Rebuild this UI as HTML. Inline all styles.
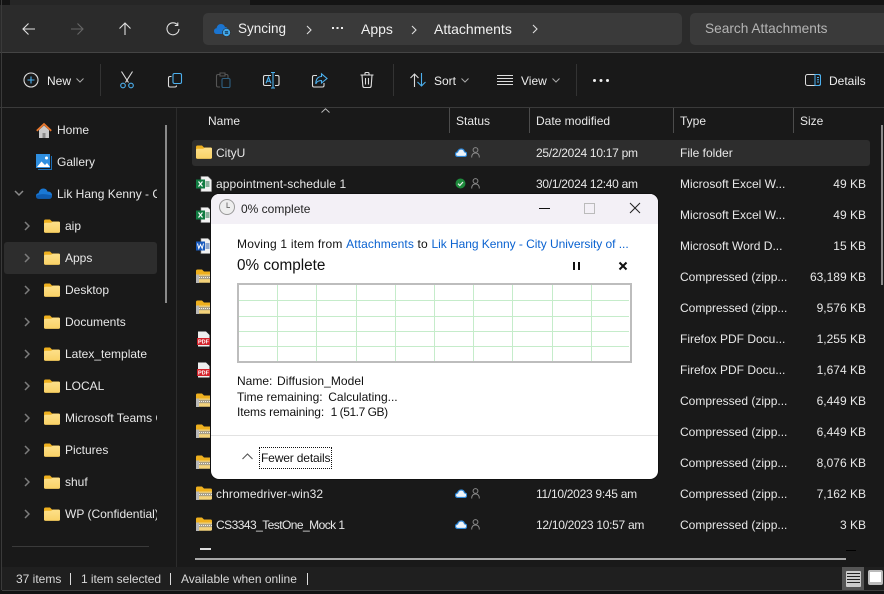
<!DOCTYPE html>
<html><head><meta charset="utf-8">
<style>
html,body{margin:0;padding:0;width:884px;height:594px;overflow:hidden;background:#191919}
body{position:relative;font-family:"Liberation Sans",sans-serif;font-size:12px;color:#e8e8e8}
.t{position:absolute;line-height:16px;white-space:nowrap}
.b{position:absolute}
.r{text-align:right;width:80px;left:786px}
.g{color:#d8d8d8}
svg{position:absolute;overflow:visible}
.i{fill:none;stroke:#e0e0e0;stroke-width:1.1}
.d{color:#111}
.l{color:#0a62d0}
.dt{letter-spacing:-.28px}
</style></head><body>
<svg width="0" height="0" style="position:absolute"><defs>
<linearGradient id="fg" x1="0" y1="0" x2="0" y2="1"><stop offset="0" stop-color="#fde08a"/><stop offset="1" stop-color="#f9d267"/></linearGradient>
<symbol id="f" viewBox="0 0 16 14"><path d="M0 2.200Q0 .5 1.500 .5H6l2 2h6.500Q16 2.500 16 4v8.500q0 1.200-1.500 1.200h-13Q0 13.700 0 12.500z" fill="#eeb01e"/><path d="M0 5.200Q0 3.800 1.500 3.800H7L9 2.600h5.500Q16 2.600 16 4v8.500q0 1.200-1.500 1.200h-13Q0 13.700 0 12.500z" fill="url(#fg)"/></symbol>
<symbol id="z" viewBox="0 0 16 14"><path d="M0 2Q0 .5 1.500 .5H6l2 2h6.500Q16 2.500 16 4v2H0z" fill="#eeb01e"/><path d="M0 5.500h16v7q0 1.200-1.500 1.200h-13Q0 13.700 0 12.500z" fill="#f3d27a"/><path d="M3 6.800h13v3.400H3z" fill="#a89f85"/><path d="M3 8.500h13" stroke="#eee" stroke-dasharray="1 1"/><rect x="0" y="5.500" width="3" height="8.500" fill="#b8b8b8"/></symbol>
<symbol id="x" viewBox="0 0 16 16"><path d="M5 .5h7l3.500 3.500v11.500H5z" fill="#f2f2f2" stroke="#999" stroke-width=".6"/><path d="M9.500 6h4M9.500 8h4M9.500 10h4" stroke="#1d7044"/><rect x="0" y="3.500" width="9" height="9" fill="#107c41"/><path d="M2.500 5.500l4 5M6.500 5.500l-4 5" stroke="#fff" stroke-width="1.200"/></symbol>
<symbol id="w" viewBox="0 0 16 16"><path d="M5 .5h7l3.500 3.500v11.500H5z" fill="#f2f2f2" stroke="#999" stroke-width=".6"/><path d="M9.500 6h4M9.500 8h4M9.500 10h4" stroke="#2a5ca8"/><rect x="0" y="3.500" width="9" height="9" fill="#185abd"/><path d="M1.500 5.500l1.300 5 1.700-4 1.700 4 1.300-5" stroke="#fff" fill="none"/></symbol>
<symbol id="p" viewBox="0 0 13 16"><path d="M1 .5h8l3.500 3.500v11.500H1z" fill="#eee"/><rect y="7" width="13" height="7" fill="#d3222a"/><text x="6.500" y="12.700" font-size="5.500" font-weight="bold" text-anchor="middle" fill="#fff" font-family="Liberation Sans">PDF</text></symbol>
<symbol id="c" viewBox="0 0 12 9"><path d="M3 8.500Q.5 8.500 .5 6.300 .5 4.300 2.600 4 3.400 1 6.300 1 9 1 9.500 3.800 11.700 4 11.700 6.200 11.700 8.500 9.300 8.500z" fill="#eef4fa" stroke="#2b86d8" stroke-width="1.200"/></symbol>
<symbol id="u" viewBox="0 0 9 11"><circle cx="4.500" cy="3" r="2.400" fill="none" stroke="#8a8a8a"/><path d="M.7 10.500Q.7 6 4.500 6 8.300 6 8.300 10.500" fill="none" stroke="#8a8a8a"/></symbol>
<symbol id="ch" viewBox="0 0 6 10"><path d="M1 1l4 4-4 4" fill="none" stroke="#7d7d7d" stroke-width="1.500"/></symbol>
</defs></svg>

<!-- top bands -->
<div class="b" style="left:0;top:0;width:884px;height:5px;background:#141414"></div>
<div class="b" style="left:10px;top:0;width:240px;height:5px;background:#262626"></div>
<div class="b" style="left:0;top:5px;width:884px;height:47px;background:#2b2b2b"></div>
<div class="b" style="left:0;top:52px;width:884px;height:1px;background:#444"></div>
<div class="b" style="left:0;top:107px;width:884px;height:1px;background:#3a3a3a"></div>
<div class="b" style="left:1px;top:0;width:1px;height:590px;background:#3a3a3a"></div>
<div class="b" style="left:176px;top:108px;width:1px;height:459px;background:#2c2c2c"></div>

<!-- nav -->
<svg style="left:22px;top:22px" width="14" height="14" class="i"><path d="M13 7H1M6.500 1.500L1 7l5.500 5.500"/></svg>
<svg style="left:70px;top:22px" width="14" height="14" fill="none" stroke="#666" stroke-width="1.100"><path d="M1 7h12M7.500 1.500L13 7l-5.500 5.500"/></svg>
<svg style="left:118px;top:22px" width="14" height="14" class="i"><path d="M7 13V1M1.500 6.500L7 1l5.500 5.500"/></svg>
<svg style="left:166px;top:22px" width="14" height="14" class="i"><path d="M11.500 2.800A6 6 0 1 0 13 7"/><path d="M11.800 .5v3h-3"/></svg>

<!-- address -->
<div class="b" style="left:203px;top:13px;width:479px;height:32px;background:#3a3a3a;border-radius:5px"></div>
<div class="b" style="left:690px;top:13px;width:194px;height:32px;background:#3a3a3a;border-radius:5px 0 0 5px"></div>
<svg style="left:214px;top:23px" width="18" height="14" viewBox="0 0 18 14"><path d="M3 11Q0 11 0 8 0 5.500 2.500 5.200 3.500 1 7 1 10 1 11 4 14 4 14 7.500L13 11z" fill="#1a74d0"/><circle cx="12.500" cy="9.500" r="4" fill="#42a8ea" stroke="#2b2b2b" stroke-width=".6"/><path d="M10.800 8.800h3.300M14.200 10.200h-3.300" stroke="#12314a"/></svg>
<div class="t" style="left:238px;top:21px;font-size:13.500px;color:#f0f0f0">Syncing</div>
<svg style="left:306px;top:25px" width="6" height="10"><path d="M1 1l4 4-4 4" fill="none" stroke="#ddd" stroke-width="1.100"/></svg>
<div class="b" style="left:332px;top:27px;width:2px;height:2px;background:#eee;box-shadow:4.500px 0 #eee,9px 0 #eee"></div>
<div class="t" style="left:361px;top:21px;font-size:14px;color:#f0f0f0">Apps</div>
<svg style="left:411px;top:25px" width="6" height="10"><path d="M1 1l4 4-4 4" fill="none" stroke="#ddd" stroke-width="1.100"/></svg>
<div class="t" style="left:434px;top:21px;font-size:14px;color:#f0f0f0">Attachments</div>
<svg style="left:532px;top:24px" width="6" height="10"><path d="M1 1l4 4-4 4" fill="none" stroke="#ddd" stroke-width="1.100"/></svg>
<div class="t" style="left:705px;top:21px;font-size:13.700px;color:#b5b5b5">Search Attachments</div>

<!-- toolbar -->
<svg style="left:23px;top:72px" width="16" height="16"><circle cx="8" cy="8" r="7" fill="none" stroke="#ddd" stroke-width="1.100"/><path d="M8 4.500v7M4.500 8h7" stroke="#4cb0ee" stroke-width="1.100"/></svg>
<div class="t" style="left:47px;top:73px;color:#eee">New</div>
<svg style="left:76px;top:78px" width="8" height="5"><path d="M.5 .5L4 4 7.500 .5" fill="none" stroke="#aaa"/></svg>
<div class="b" style="left:100px;top:64px;width:1px;height:32px;background:#333"></div>
<svg style="left:119px;top:71px" width="16" height="18" fill="none"><path d="M2.500 .5l7 11M13.500 .5l-7 11" stroke="#ddd" stroke-width="1.100"/><circle cx="4" cy="14.500" r="2.300" stroke="#4cb0ee" stroke-width="1.100"/><circle cx="12" cy="14.500" r="2.300" stroke="#4cb0ee" stroke-width="1.100"/></svg>
<svg style="left:168px;top:73px" width="14" height="15" fill="none" stroke-width="1.100"><rect x="5" y=".5" width="8.500" height="10" rx="1.500" stroke="#4cb0ee"/><path d="M3.500 3.500H2Q.5 3.500 .5 5v7.500Q.5 14 2 14h5Q8.500 14 8.500 12.500" stroke="#ddd"/></svg>
<svg style="left:216px;top:72px" width="15" height="16" fill="none" stroke-width="1.100"><path d="M4 2.500H2Q.5 2.500 .5 4v9.500Q.5 15 2 15h2" stroke="#555"/><path d="M4 1h5v3H4z M9 2.500h1.500Q12 2.500 12 4v2" stroke="#555"/><rect x="6" y="6.500" width="8" height="9" rx="1.300" stroke="#2f5f80"/></svg>
<svg style="left:263px;top:72px" width="17" height="17" fill="none" stroke-width="1.100"><path d="M8 3.500H2Q.5 3.500 .5 5v7Q.5 13.500 2 13.500h6M12 3.500h2.500Q16 3.500 16 5v7Q16 13.500 14.500 13.500H12" stroke="#ddd"/><path d="M10 .5v15.500M8 .5h4M8 16h4" stroke="#4cb0ee"/><path d="M3 11.300l2.500-6.300 2.500 6.300M3.900 9.200h3.200" stroke="#4cb0ee"/></svg>
<svg style="left:312px;top:73px" width="16" height="15" fill="none" stroke-width="1.100"><path d="M5 2.500H2Q.5 2.500 .5 4v8.500Q.5 14 2 14h8.500Q12 14 12 12.500V10" stroke="#ddd"/><path d="M9.500 .8L15 5.500 9.500 10V7.500Q5 7.500 3.800 11 3.800 3.800 9.500 3.500z" stroke="#4cb0ee"/></svg>
<svg style="left:360px;top:72px" width="14" height="16" fill="none" stroke="#ddd" stroke-width="1.100"><path d="M.5 3h13M5 3V1.500Q5 .5 6 .5h2Q9 .5 9 1.500V3M2 3l.8 11Q3 15.500 4.500 15.500h5Q11 15.500 11.200 14L12 3M5.500 6v6.500M8.500 6v6.500"/></svg>
<div class="b" style="left:393px;top:64px;width:1px;height:32px;background:#333"></div>
<svg style="left:410px;top:73px" width="16" height="14" fill="none" stroke-width="1.100"><path d="M4.500 14V1M.5 5l4-4 4 4" stroke="#ddd"/><path d="M11.500 0v13M7.500 9l4 4 4-4" stroke="#4cb0ee"/></svg>
<div class="t" style="left:434px;top:73px;color:#eee">Sort</div>
<svg style="left:461px;top:78px" width="8" height="5"><path d="M.5 .5L4 4 7.500 .5" fill="none" stroke="#aaa"/></svg>
<svg style="left:497px;top:75px" width="16" height="10" stroke="#ddd"><path d="M0 .5h16M0 3.500h16M0 6.500h16M0 9.500h16"/></svg>
<div class="t" style="left:521px;top:73px;color:#eee">View</div>
<svg style="left:552px;top:78px" width="8" height="5"><path d="M.5 .5L4 4 7.500 .5" fill="none" stroke="#aaa"/></svg>
<div class="b" style="left:576px;top:64px;width:1px;height:32px;background:#333"></div>
<div class="b" style="left:593px;top:79px;width:3px;height:3px;border-radius:50%;background:#eee;box-shadow:6.500px 0 #eee,13px 0 #eee"></div>
<svg style="left:805px;top:74px" width="16" height="12" fill="none"><rect x=".5" y=".5" width="15" height="11" rx="2" stroke="#ddd"/><path d="M10 .5h4Q15.500 .5 15.500 2v8Q15.500 11.500 14 11.500h-4zM12 3.500h2M12 5.800h2M12 8h2" stroke="#4cb0ee"/></svg>
<div class="t" style="left:829px;top:73px;color:#eee">Details</div>

<!-- header -->
<svg style="left:321px;top:108px" width="9" height="5"><path d="M.5 4.500L4.500 .8 8.500 4.500" fill="none" stroke="#bbb"/></svg>
<div class="t" style="left:208px;top:113px">Name</div>
<div class="t" style="left:456px;top:113px">Status</div>
<div class="t" style="left:536px;top:113px">Date modified</div>
<div class="t" style="left:680px;top:113px">Type</div>
<div class="t" style="left:800px;top:113px">Size</div>
<div class="b" style="left:449px;top:108px;width:1px;height:25px;background:#4c4c4c"></div>
<div class="b" style="left:529px;top:108px;width:1px;height:25px;background:#4c4c4c"></div>
<div class="b" style="left:673px;top:108px;width:1px;height:25px;background:#4c4c4c"></div>
<div class="b" style="left:793px;top:108px;width:1px;height:25px;background:#4c4c4c"></div>

<!-- sidebar -->
<div class="b" style="left:4px;top:242px;width:153px;height:32px;background:#2d2d2d;border-radius:3px"></div>
<div class="b" style="left:165px;top:125px;width:2px;height:178px;background:#8a8a8a"></div>
<svg style="left:36px;top:123px" width="16" height="15" viewBox="0 0 16 15"><path d="M3 7v8h10V7L8 2.500z" fill="#c9c9c9"/><rect x="6.500" y="10" width="3" height="5" fill="#8a8a8a"/><path d="M.8 7.800L8 1l7.200 6.800" fill="none" stroke="#e8762c" stroke-width="1.800"/></svg>
<div class="t" style="left:57px;top:122px">Home</div>
<svg style="left:36px;top:154px" width="16" height="16" viewBox="0 0 16 16"><rect x="0" y="0" width="14" height="14" fill="#2f8fe0"/><path d="M1 13l4.500-5.500L9 11l2-2 3 4z" fill="#fff"/><circle cx="10.500" cy="4" r="1.500" fill="#fff"/><path d="M15.500 2v13.500H2" fill="none" stroke="#1c6fb8"/></svg>
<div class="t" style="left:57px;top:154px">Gallery</div>
<svg style="left:14px;top:190px" width="10" height="7"><path d="M1 1l4 4 4-4" fill="none" stroke="#8a8a8a" stroke-width="1.500"/></svg>
<svg style="left:36px;top:188px" width="16" height="11" viewBox="0 0 16 11"><path d="M3 10.800Q0 10.800 0 8 0 5.500 2.500 5.300 3.500 .5 7.500 .5 10.500 .5 11.500 3.500 16 3.500 16 7.500 16 10.800 13 10.800z" fill="#1a78d4"/><path d="M0 8q5-3.500 16-.5 0 3.300-3 3.300H3Q0 10.800 0 8z" fill="#0f5cb0"/></svg>
<div class="t" style="left:57px;top:186px;width:100px;overflow:hidden">Lik Hang Kenny - City</div>

<svg style="left:24px;top:221px" width="6" height="10"><use href="#ch"/></svg><svg style="left:44px;top:219px" width="16" height="14"><use href="#f"/></svg><div class="t" style="left:65px;top:218px">aip</div>
<svg style="left:24px;top:253px" width="6" height="10"><use href="#ch"/></svg><svg style="left:44px;top:251px" width="16" height="14"><use href="#f"/></svg><div class="t" style="left:65px;top:250px">Apps</div>
<svg style="left:24px;top:285px" width="6" height="10"><use href="#ch"/></svg><svg style="left:44px;top:283px" width="16" height="14"><use href="#f"/></svg><div class="t" style="left:65px;top:282px">Desktop</div>
<svg style="left:24px;top:317px" width="6" height="10"><use href="#ch"/></svg><svg style="left:44px;top:315px" width="16" height="14"><use href="#f"/></svg><div class="t" style="left:65px;top:314px">Documents</div>
<svg style="left:24px;top:349px" width="6" height="10"><use href="#ch"/></svg><svg style="left:44px;top:347px" width="16" height="14"><use href="#f"/></svg><div class="t" style="left:65px;top:346px">Latex_template</div>
<svg style="left:24px;top:381px" width="6" height="10"><use href="#ch"/></svg><svg style="left:44px;top:379px" width="16" height="14"><use href="#f"/></svg><div class="t" style="left:65px;top:378px">LOCAL</div>
<svg style="left:24px;top:413px" width="6" height="10"><use href="#ch"/></svg><svg style="left:44px;top:411px" width="16" height="14"><use href="#f"/></svg><div class="t" style="left:65px;top:410px;width:92px;overflow:hidden">Microsoft Teams Chat</div>
<svg style="left:24px;top:445px" width="6" height="10"><use href="#ch"/></svg><svg style="left:44px;top:443px" width="16" height="14"><use href="#f"/></svg><div class="t" style="left:65px;top:442px">Pictures</div>
<svg style="left:24px;top:477px" width="6" height="10"><use href="#ch"/></svg><svg style="left:44px;top:475px" width="16" height="14"><use href="#f"/></svg><div class="t" style="left:65px;top:474px">shuf</div>
<svg style="left:24px;top:509px" width="6" height="10"><use href="#ch"/></svg><svg style="left:44px;top:507px" width="16" height="14"><use href="#f"/></svg><div class="t" style="left:65px;top:506px;width:92px;overflow:hidden">WP (Confidential)</div>
<div class="b" style="left:12px;top:546px;width:137px;height:1px;background:#3a3a3a"></div>

<!-- rows -->
<div class="b" style="left:192px;top:140px;width:678px;height:26px;background:#2d2d2d;border-radius:3px"></div>
<svg style="left:196px;top:145px" width="16" height="14"><use href="#f"/></svg><div class="t" style="left:216px;top:145px">CityU</div>
<svg style="left:455px;top:148px" width="12" height="9"><use href="#c"/></svg><svg style="left:471px;top:147px" width="9" height="11"><use href="#u"/></svg>
<div class="t dt" style="left:536px;top:145px">25/2/2024 10:17 pm</div><div class="t" style="left:680px;top:145px">File folder</div>

<svg style="left:196px;top:176px" width="16" height="16"><use href="#x"/></svg><div class="t" style="left:216px;top:176px;letter-spacing:.1px">appointment-schedule 1</div>
<svg style="left:455px;top:178px" width="11" height="11"><circle cx="5.500" cy="5.500" r="5" fill="#1e8a3c"/><path d="M3 5.700l1.800 1.800L8 4" fill="none" stroke="#eee" stroke-width="1.200"/></svg><svg style="left:471px;top:178px" width="9" height="11"><use href="#u"/></svg>
<div class="t dt" style="left:536px;top:176px">30/1/2024 12:40 am</div><div class="t" style="left:680px;top:176px">Microsoft Excel W...</div><div class="t r" style="top:176px">49 KB</div>

<svg style="left:196px;top:207px" width="16" height="16"><use href="#x"/></svg>
<div class="t" style="left:680px;top:207px">Microsoft Excel W...</div><div class="t r" style="top:207px">49 KB</div>
<svg style="left:196px;top:238px" width="16" height="16"><use href="#w"/></svg>
<div class="t" style="left:680px;top:238px">Microsoft Word D...</div><div class="t r" style="top:238px">15 KB</div>
<svg style="left:196px;top:269px" width="16" height="14"><use href="#z"/></svg>
<div class="t" style="left:680px;top:269px">Compressed (zipp...</div><div class="t r" style="top:269px">63,189 KB</div>
<svg style="left:196px;top:300px" width="16" height="14"><use href="#z"/></svg>
<div class="t" style="left:680px;top:300px">Compressed (zipp...</div><div class="t r" style="top:300px">9,576 KB</div>
<svg style="left:197px;top:331px" width="13" height="16"><use href="#p"/></svg>
<div class="t" style="left:680px;top:331px">Firefox PDF Docu...</div><div class="t r" style="top:331px">1,255 KB</div>
<svg style="left:197px;top:362px" width="13" height="16"><use href="#p"/></svg>
<div class="t" style="left:680px;top:362px">Firefox PDF Docu...</div><div class="t r" style="top:362px">1,674 KB</div>
<svg style="left:196px;top:393px" width="16" height="14"><use href="#z"/></svg>
<div class="t" style="left:680px;top:393px">Compressed (zipp...</div><div class="t r" style="top:393px">6,449 KB</div>
<svg style="left:196px;top:424px" width="16" height="14"><use href="#z"/></svg>
<div class="t" style="left:680px;top:424px">Compressed (zipp...</div><div class="t r" style="top:424px">6,449 KB</div>
<svg style="left:196px;top:455px" width="16" height="14"><use href="#z"/></svg>
<div class="t" style="left:680px;top:455px">Compressed (zipp...</div><div class="t r" style="top:455px">8,076 KB</div>
<svg style="left:196px;top:486px" width="16" height="14"><use href="#z"/></svg><div class="t" style="left:216px;top:486px;letter-spacing:.1px">chromedriver-win32</div>
<svg style="left:455px;top:489px" width="12" height="9"><use href="#c"/></svg><svg style="left:471px;top:488px" width="9" height="11"><use href="#u"/></svg>
<div class="t dt" style="left:536px;top:486px">11/10/2023 9:45 am</div><div class="t" style="left:680px;top:486px">Compressed (zipp...</div><div class="t r" style="top:486px">7,162 KB</div>
<svg style="left:196px;top:517px" width="16" height="14"><use href="#z"/></svg><div class="t" style="left:216px;top:517px;letter-spacing:-.55px">CS3343_TestOne_Mock 1</div>
<svg style="left:455px;top:520px" width="12" height="9"><use href="#c"/></svg><svg style="left:471px;top:519px" width="9" height="11"><use href="#u"/></svg>
<div class="t dt" style="left:536px;top:517px">12/10/2023 10:57 am</div><div class="t" style="left:680px;top:517px">Compressed (zipp...</div><div class="t r" style="top:517px">3 KB</div>

<div class="b" style="left:200px;top:548px;width:11px;height:2px;background:#ddd"></div>
<div class="b" style="left:846px;top:550px;width:10px;height:1px;background:#000"></div>
<div class="b" style="left:195px;top:558px;width:651px;height:2px;background:#a8a8a8"></div>
<div class="b" style="left:881px;top:125px;width:2px;height:160px;background:#8a8a8a"></div>

<!-- status -->
<div class="b" style="left:2px;top:567px;width:882px;height:23px;background:#1f1f1f"></div>
<div class="b" style="left:2px;top:590px;width:882px;height:1px;background:#3f3f3f"></div>
<div class="b" style="left:0;top:591px;width:884px;height:3px;background:#121212"></div>
<div class="t g" style="left:16px;top:571px">37 items</div>
<div class="b" style="left:70px;top:573px;width:1px;height:12px;background:#ddd"></div>
<div class="t g" style="left:81px;top:571px;letter-spacing:-.05px">1 item selected</div>
<div class="b" style="left:170px;top:573px;width:1px;height:12px;background:#ddd"></div>
<div class="t g" style="left:181px;top:571px">Available when online</div>
<div class="b" style="left:307px;top:573px;width:1px;height:12px;background:#ddd"></div>
<div class="b" style="left:842px;top:567px;width:22px;height:23px;background:#555"></div>
<div class="b" style="left:846px;top:571px;width:15px;height:16px;background:#ccc;border-radius:1px"></div>
<svg style="left:847px;top:573px" width="13" height="12" stroke="#222"><path d="M0 .5h13M0 3.500h13M0 6.500h13M0 9.500h13"/></svg>
<div class="b" style="left:868px;top:570px;width:11px;height:10px;background:#fff;border:2px solid #bbb;border-bottom-width:3px;border-radius:2px"></div>

<!-- dialog -->
<div class="b" style="left:211px;top:194px;width:447px;height:285px;background:#fff;border-radius:8px;overflow:hidden;box-shadow:0 0 0 1px #111">
<div class="b" style="left:0;top:0;width:447px;height:30px;background:#f3f0f6"></div>
</div>
<svg style="left:219px;top:199px" width="16" height="16"><circle cx="8" cy="8" r="7.500" fill="#eee" stroke="#999"/><path d="M8 3.500V8.500H11" fill="none" stroke="#777"/></svg>
<div class="t d" style="left:241px;top:201px;color:#222">0% complete</div>
<div class="b" style="left:539px;top:208px;width:11px;height:1px;background:#111"></div>
<div class="b" style="left:584px;top:203px;width:9px;height:9px;border:1px solid #bbb"></div>
<svg style="left:630px;top:203px" width="10" height="10" stroke="#222"><path d="M0 0l10 10M10 0L0 10"/></svg>

<div class="t d" style="left:237px;top:236px"><span style="letter-spacing:.2px">Moving 1 item from </span><span class="l" style="letter-spacing:.1px">Attachments</span><span style="letter-spacing:.2px"> to </span><span class="l" style="letter-spacing:-.04px">Lik Hang Kenny - City University of ...</span></div>
<div class="t d" style="left:237px;top:257px;font-size:15.300px;line-height:18px">0% complete</div>
<div class="b" style="left:573px;top:262px;width:2px;height:8px;background:#111;box-shadow:5px 0 #111"></div>
<svg style="left:619px;top:262px" width="8" height="8" stroke="#111" stroke-width="2"><path d="M.5 .5l7 7M7.500 .5l-7 7"/></svg>

<svg style="left:237px;top:283px" width="395" height="80">
<rect x="1" y="1" width="393" height="78" fill="#fff" stroke="#bdbdbd" stroke-width="2"/>
<g stroke="#c5ecca" stroke-width="1">
<path d="M2 17.500h390M2 33.500h390M2 48.500h390M2 63.500h390"/>
<path d="M40.500 2v76M79.500 2v76M119.500 2v76M158.500 2v76M197.500 2v76M236.500 2v76M275.500 2v76M315.500 2v76M354.500 2v76"/>
</g></svg>

<div class="t d" style="left:237px;top:373px">Name:&nbsp; <span style="margin-left:-2px;letter-spacing:.07px">Diffusion_Model</span></div>
<div class="t d" style="left:237px;top:389px">Time remaining:&nbsp; <span style="margin-left:-1px">Calculating...</span></div>
<div class="t d" style="left:237px;top:404px"><span style="letter-spacing:-.1px">Items remaining:&nbsp; </span><span style="letter-spacing:-.45px">1 (51.7 GB)</span></div>
<div class="b" style="left:211px;top:435px;width:447px;height:1px;background:#e2e2e2"></div>
<svg style="left:242px;top:453px" width="11" height="7"><path d="M.5 6L5.500 1l5 5" fill="none" stroke="#555" stroke-width="1.100"/></svg>
<div class="b" style="left:259px;top:447px;width:71px;height:20px;border:1px dotted #111"></div>
<div class="t d" style="left:261px;top:450px;letter-spacing:-.15px">Fewer details</div>
</body></html>
